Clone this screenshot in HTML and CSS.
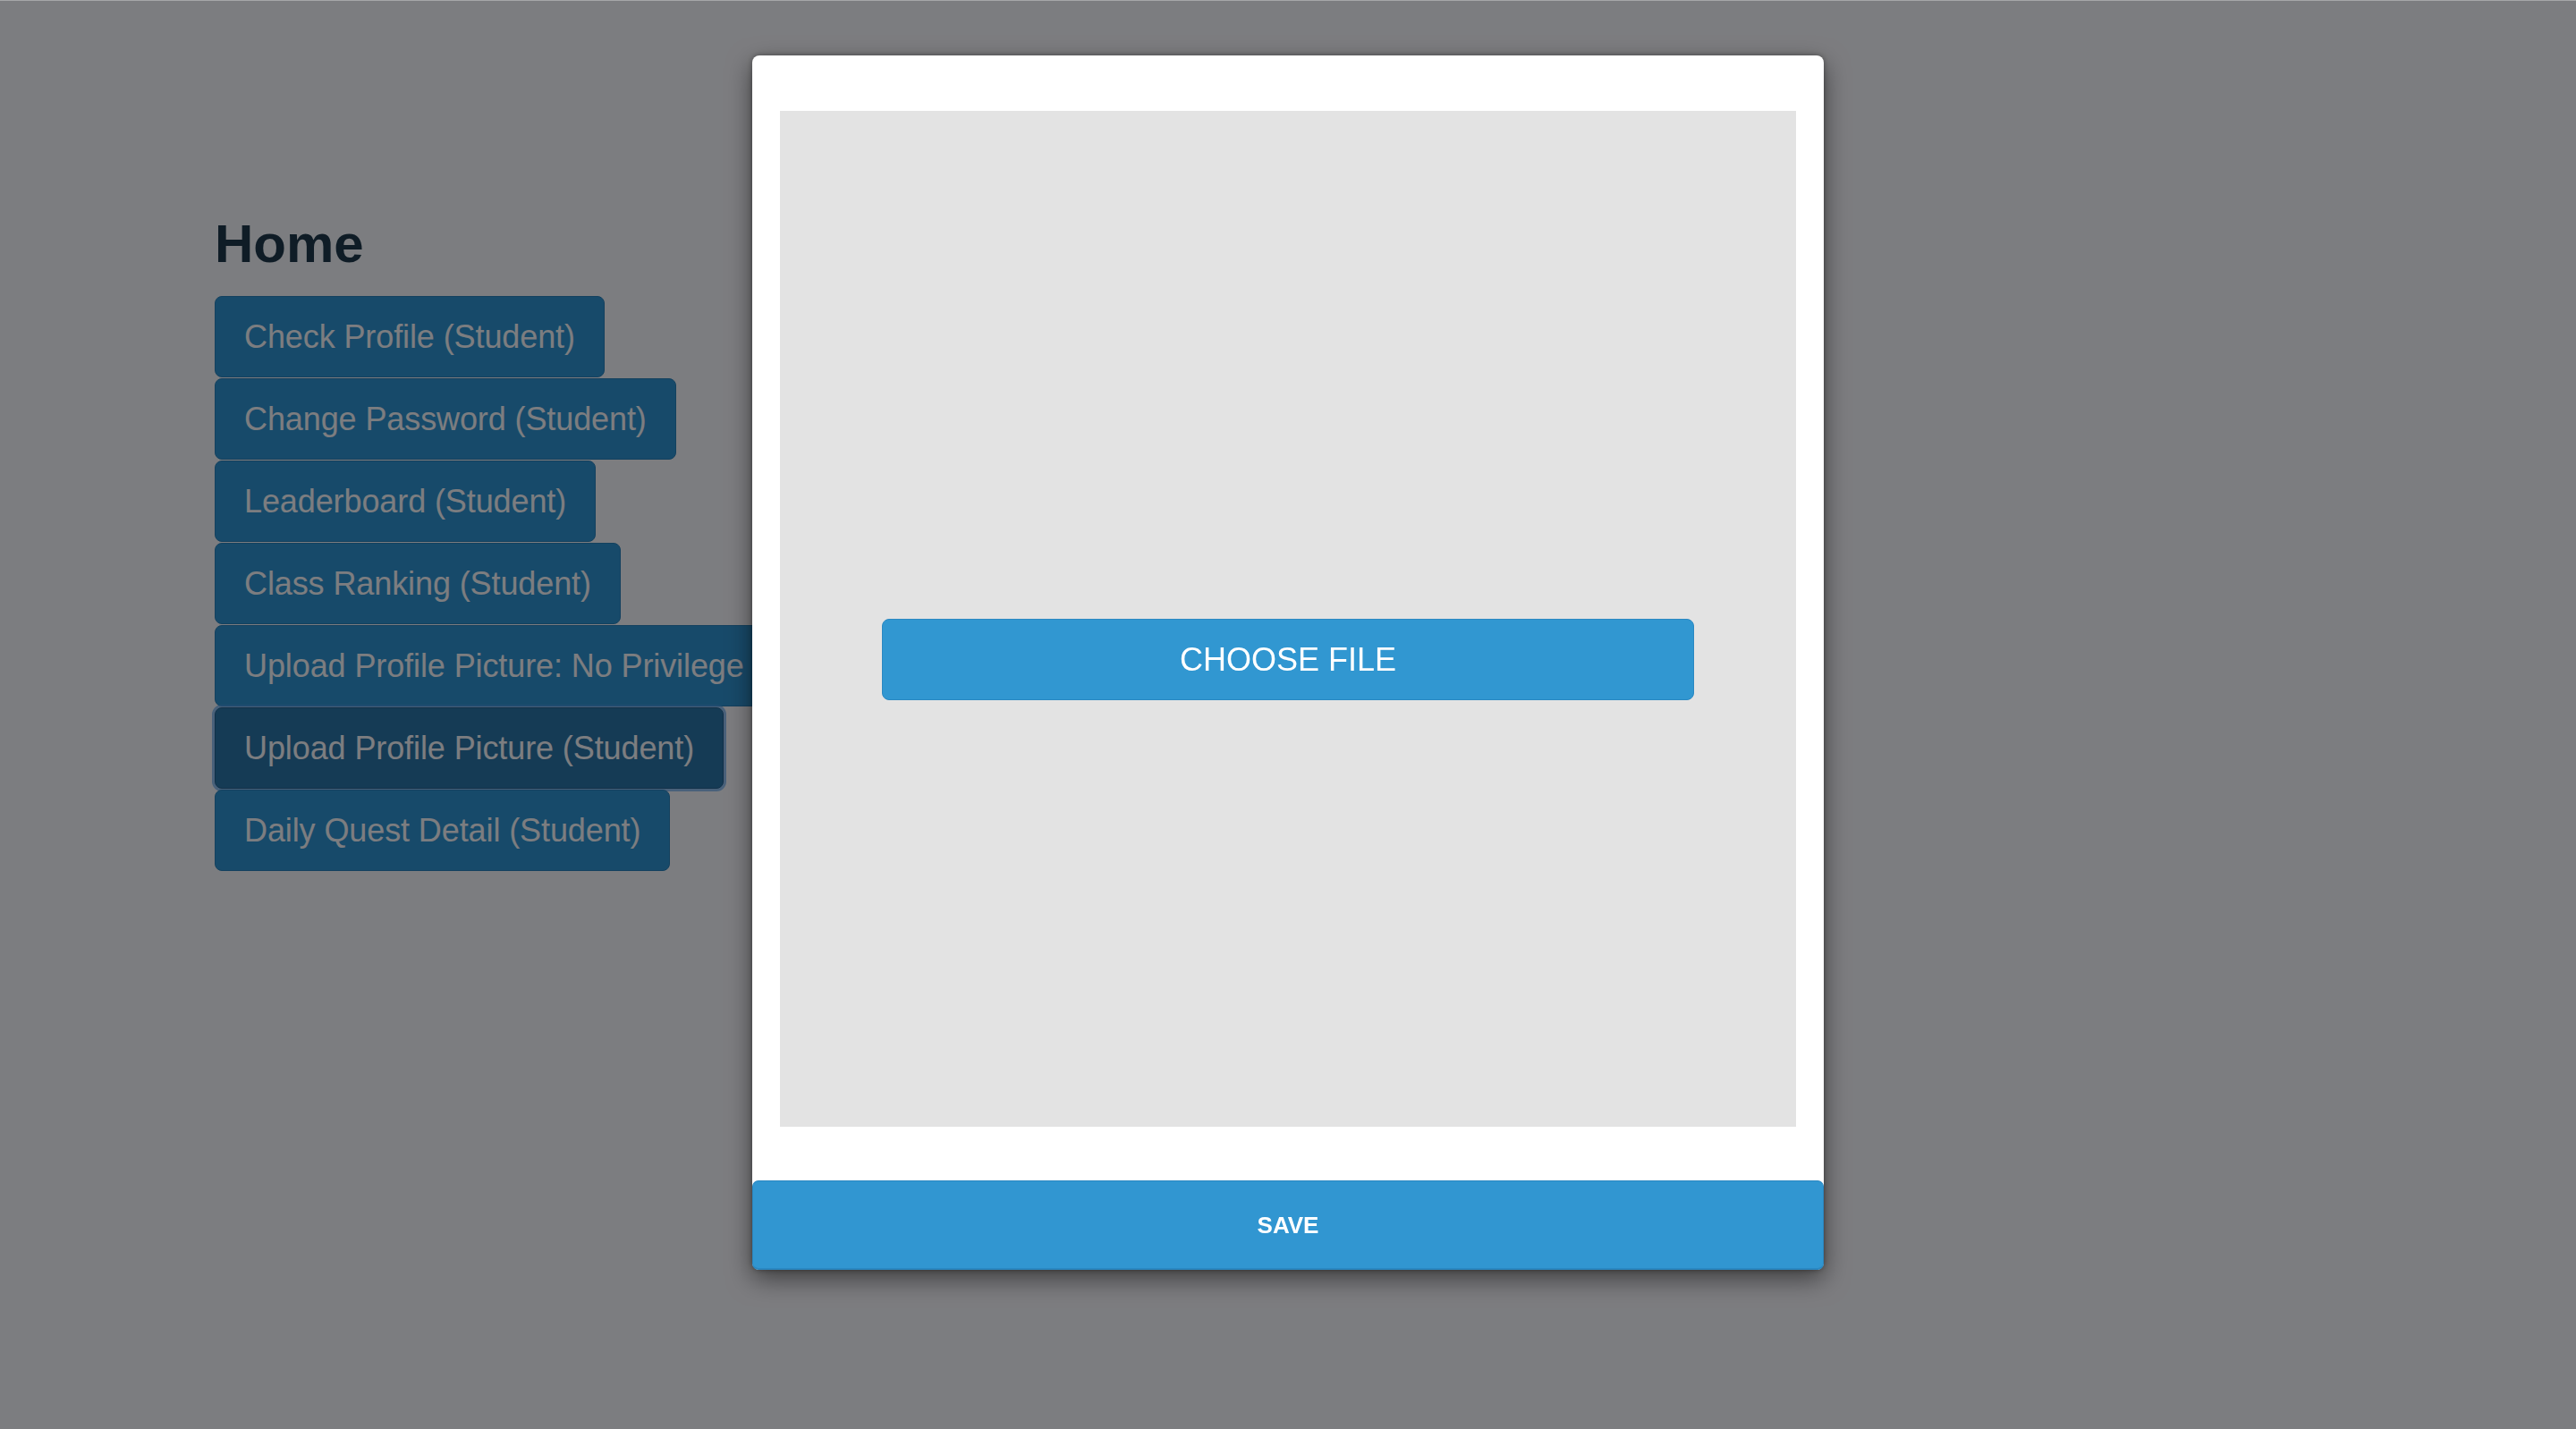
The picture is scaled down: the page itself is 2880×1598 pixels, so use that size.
FILE: index.html
```html
<!DOCTYPE html>
<html>
<head>
<meta charset="utf-8">
<title>Home</title>
<link rel="stylesheet" href="styles.css">
</head>
<body>
<main class="page">
  <h1 class="title">Home</h1>
  <nav class="menu">
    <button class="nav-btn">Check Profile (Student)</button>
    <button class="nav-btn">Change Password (Student)</button>
    <button class="nav-btn">Leaderboard (Student)</button>
    <button class="nav-btn">Class Ranking (Student)</button>
    <button class="nav-btn">Upload Profile Picture: No Privilege</button>
    <button class="nav-btn nav-btn-active">Upload Profile Picture (Student)</button>
    <button class="nav-btn">Daily Quest Detail (Student)</button>
  </nav>
</main>
<div class="overlay">
  <div class="modal">
    <div class="drop">
      <button class="choose">CHOOSE FILE</button>
    </div>
    <button class="save">SAVE</button>
  </div>
</div>
</body>
</html>
```
FILE: styles.css
```css
* { box-sizing: border-box; }
html, body { margin: 0; padding: 0; background: #ffffff; }
body {
  font-family: "Liberation Sans", Arial, Helvetica, sans-serif;
  width: 2880px;
  height: 1598px;
  overflow: hidden;
}
.page {
  padding: 238px 0 0 240px;
}
.title {
  margin: 0 0 24px;
  font-size: 60px;
  line-height: 69px;
  font-weight: bold;
  color: #1f3947;
}
.menu {
  display: flex;
  flex-direction: column;
  align-items: flex-start;
}
.nav-btn {
  display: block;
  margin: 0 0 1px;
  padding: 24px 32px;
  font-family: "Liberation Sans", Arial, Helvetica, sans-serif;
  font-size: 36px;
  line-height: 41px;
  letter-spacing: -0.1px;
  color: #ffffff;
  background: #3197d1;
  border: 1px solid #2a84bb;
  border-radius: 8px;
  white-space: nowrap;
  text-align: left;
}
.nav-btn-active {
  background: #2d77a6;
  border-color: #23628c;
  box-shadow: 0 0 0 3px rgba(80, 160, 235, 0.6);
}
.overlay {
  position: fixed;
  left: 0;
  top: 0;
  right: 0;
  bottom: 0;
  background: rgba(0, 2, 8, 0.514);
  border-top: 1px solid #a6a7a9;
  display: flex;
  justify-content: center;
  align-items: flex-start;
  padding-top: 61px;
}
.modal {
  width: 1198px;
  background: #ffffff;
  border-radius: 8px;
  box-shadow: 0 10px 28px rgba(0, 0, 0, 0.5), 0 0 6px rgba(0, 0, 0, 0.35);
  display: flex;
  flex-direction: column;
}
.drop {
  margin: 62px 31px 60px;
  height: 1136px;
  background: #e3e3e3;
  padding-top: 568px;
  display: flex;
  justify-content: center;
  align-items: flex-start;
}
.choose {
  width: 908px;
  height: 91px;
  background: #3197d1;
  border: 1px solid #2a88c2;
  border-radius: 8px;
  color: #ffffff;
  font-family: "Liberation Sans", Arial, Helvetica, sans-serif;
  font-size: 36px;
  line-height: 41px;
  padding: 0;
}
.save {
  width: 100%;
  height: 100px;
  background: #3196d1;
  border: 1px solid #2a87c1;
  border-bottom-width: 2px;
  border-radius: 7px;
  color: #ffffff;
  font-family: "Liberation Sans", Arial, Helvetica, sans-serif;
  font-size: 26px;
  font-weight: bold;
  line-height: 30px;
  padding: 0;
}
```
